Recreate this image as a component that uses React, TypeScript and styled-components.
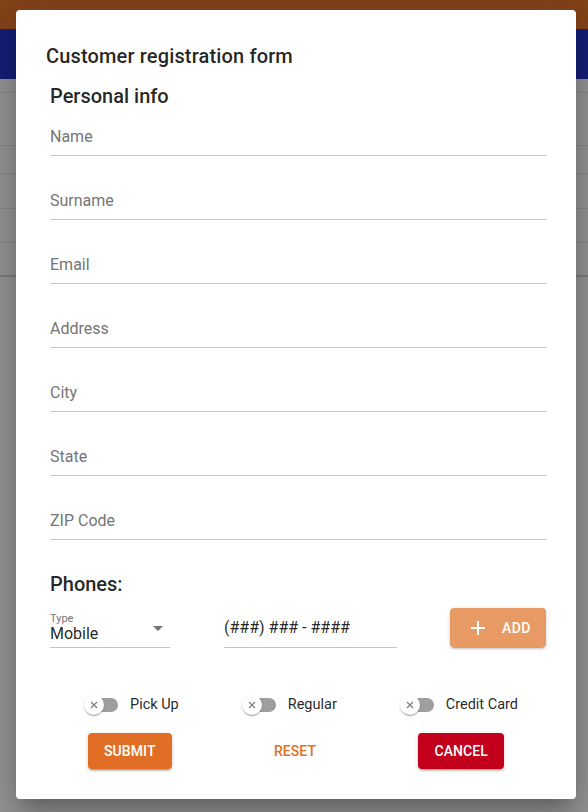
import React from "react";
import styled, { createGlobalStyle } from "styled-components";

const Global = createGlobalStyle`
  html, body { margin: 0; padding: 0; }
  body {
    font-family: Roboto, "Liberation Sans", Arial, sans-serif;
    background: #979797;
    width: 588px;
    height: 812px;
    overflow: hidden;
  }
  * { box-sizing: border-box; }
`;

const Page = styled.div`
  position: relative;
  width: 588px;
  height: 812px;
  background: #979797;
  overflow: hidden;
`;

const TopBar = styled.div`
  height: 29px;
  background: #84431a;
`;

const Band = styled.div`
  height: 50px;
  background: #151f78;
`;

const ListRow = styled.div<{ $h: number; $strong?: boolean }>`
  height: ${(p) => p.$h}px;
  border-bottom: ${(p) => (p.$strong ? "2px solid #7d7d7d" : "1px solid #8a8a8a")};
`;

const Dialog = styled.div`
  position: absolute;
  top: 10px;
  left: 16px;
  width: 560px;
  height: 789px;
  background: #fff;
  border-radius: 4px;
  box-shadow: 0 11px 15px -7px rgba(0, 0, 0, 0.2), 0 24px 38px 3px rgba(0, 0, 0, 0.14),
    0 9px 46px 8px rgba(0, 0, 0, 0.12);
  display: flex;
  flex-direction: column;
`;

const DialogTitle = styled.h2`
  margin: 0;
  padding: 30px 30px 0 30px;
  font-size: 20px;
  line-height: 32px;
  font-weight: 500;
  letter-spacing: 0.15px;
  color: rgba(0, 0, 0, 0.87);
`;

const Content = styled.div`
  padding: 10px 30px 0 34px;
  display: flex;
  flex-direction: column;
`;

const SectionTitle = styled.h3<{ $mt?: number }>`
  margin: ${(p) => p.$mt ?? 0}px 0 0 0;
  font-size: 20px;
  line-height: 28px;
  font-weight: 500;
  color: rgba(0, 0, 0, 0.87);
`;

const Fields = styled.div`
  display: flex;
  flex-direction: column;
  gap: 18px;
`;

const Field = styled.div`
  padding: 17px 0 8px 0;
  border-bottom: 1px solid #c4c4c4;
`;

const FieldLabel = styled.span`
  display: block;
  font-size: 16px;
  line-height: 20px;
  color: #757575;
`;

const PhoneRow = styled.div`
  margin-top: 10px;
  display: flex;
  align-items: flex-start;
`;

const Select = styled.div`
  position: relative;
  width: 120px;
  padding: 5px 0 4px 0;
  border-bottom: 1px solid #c4c4c4;
`;

const SelectLabel = styled.span`
  display: block;
  font-size: 11px;
  line-height: 12px;
  color: #757575;
`;

const SelectValue = styled.span`
  display: block;
  font-size: 16px;
  line-height: 18px;
  color: rgba(0, 0, 0, 0.87);
`;

const Arrow = styled.span`
  position: absolute;
  right: 7px;
  top: 18px;
  width: 0;
  height: 0;
  border-left: 5px solid transparent;
  border-right: 5px solid transparent;
  border-top: 5px solid #757575;
`;

const PhoneInput = styled.div`
  margin-left: 54px;
  width: 173px;
  padding: 10px 0 9px 0;
  border-bottom: 1px solid #c4c4c4;
  font-size: 16px;
  line-height: 20px;
  color: rgba(0, 0, 0, 0.87);
`;

const AddButton = styled.button`
  margin-left: auto;
  width: 96px;
  height: 39px;
  border: none;
  border-radius: 4px;
  background: #e89a64;
  color: #fff;
  font-family: Roboto, "Liberation Sans", Arial, sans-serif;
  font-size: 14px;
  font-weight: 500;
  letter-spacing: 0.4px;
  display: flex;
  align-items: center;
  padding: 0 0 0 20px;
  gap: 16px;
  box-shadow: 0 3px 1px -2px rgba(0, 0, 0, 0.2), 0 2px 2px 0 rgba(0, 0, 0, 0.14),
    0 1px 5px 0 rgba(0, 0, 0, 0.12);
`;

const SwitchRow = styled.div`
  margin-top: 38px;
  height: 38px;
  padding: 0 28px 0 34px;
  display: flex;
  align-items: center;
  justify-content: space-between;
`;

const SwitchGroup = styled.label`
  display: flex;
  align-items: center;
`;

const Track = styled.span`
  position: relative;
  display: block;
  width: 32px;
  height: 14px;
  margin-left: 2px;
  border-radius: 7px;
  background: #9e9e9e;
`;

const Thumb = styled.span`
  position: absolute;
  left: -2px;
  top: -3px;
  width: 20px;
  height: 20px;
  border-radius: 50%;
  background: #fff;
  box-shadow: 0 2px 1px -1px rgba(0, 0, 0, 0.2), 0 1px 1px 0 rgba(0, 0, 0, 0.14),
    0 1px 3px 0 rgba(0, 0, 0, 0.12);
  display: flex;
  align-items: center;
  justify-content: center;
`;

const SwitchText = styled.span`
  margin-left: 12px;
  font-size: 14.5px;
  line-height: 20px;
  color: rgba(0, 0, 0, 0.87);
`;

const ButtonRow = styled.div`
  margin-top: 9px;
  padding: 0 42px 0 38px;
  display: flex;
  align-items: center;
  justify-content: space-between;
`;

const ActionButton = styled.button<{ $bg?: string; $fg: string }>`
  height: 36px;
  min-width: 64px;
  padding: 0 ${(p) => (p.$bg ? 16 : 8)}px;
  border: none;
  border-radius: 4px;
  background: ${(p) => p.$bg ?? "transparent"};
  color: ${(p) => p.$fg};
  font-family: Roboto, "Liberation Sans", Arial, sans-serif;
  font-size: 14px;
  font-weight: 500;
  letter-spacing: 0.1px;
  text-transform: uppercase;
  box-shadow: ${(p) =>
    p.$bg
      ? "0 3px 1px -2px rgba(0,0,0,0.2), 0 2px 2px 0 rgba(0,0,0,0.14), 0 1px 5px 0 rgba(0,0,0,0.12)"
      : "none"};
`;

const XIcon = () => (
  <svg width="8" height="8" viewBox="0 0 8 8">
    <path d="M1 1L7 7M7 1L1 7" stroke="#7a7a7a" strokeWidth="1.1" fill="none" />
  </svg>
);

const PlusIcon = () => (
  <svg width="16" height="16" viewBox="0 0 16 16">
    <path d="M8 1v14M1 8h14" stroke="#fff" strokeWidth="2" fill="none" />
  </svg>
);

const Toggle = ({ label }: { label: string }) => (
  <SwitchGroup>
    <Track>
      <Thumb>
        <XIcon />
      </Thumb>
    </Track>
    <SwitchText>{label}</SwitchText>
  </SwitchGroup>
);

const fields = ["Name", "Surname", "Email", "Address", "City", "State", "ZIP Code"];

export default function App() {
  return (
    <>
      <Global />
      <Page>
        <TopBar />
        <Band />
        <ListRow $h={14} />
        <ListRow $h={53} />
        <ListRow $h={28} />
        <ListRow $h={35} />
        <ListRow $h={34} />
        <ListRow $h={34} $strong />
        <Dialog>
          <DialogTitle>Customer registration form</DialogTitle>
          <Content>
            <SectionTitle>Personal info</SectionTitle>
            <Fields>
              {fields.map((f) => (
                <Field key={f}>
                  <FieldLabel>{f}</FieldLabel>
                </Field>
              ))}
            </Fields>
            <SectionTitle $mt={30}>Phones:</SectionTitle>
            <PhoneRow>
              <Select>
                <SelectLabel>Type</SelectLabel>
                <SelectValue>Mobile</SelectValue>
                <Arrow />
              </Select>
              <PhoneInput>(###) ### - ####</PhoneInput>
              <AddButton>
                <PlusIcon />
                ADD
              </AddButton>
            </PhoneRow>
            <SwitchRow>
              <Toggle label="Pick Up" />
              <Toggle label="Regular" />
              <Toggle label="Credit Card" />
            </SwitchRow>
            <ButtonRow>
              <ActionButton $bg="#e06f25" $fg="#fff">Submit</ActionButton>
              <ActionButton $fg="#e06f25">Reset</ActionButton>
              <ActionButton $bg="#c3001b" $fg="#fff">Cancel</ActionButton>
            </ButtonRow>
          </Content>
        </Dialog>
      </Page>
    </>
  );
}
